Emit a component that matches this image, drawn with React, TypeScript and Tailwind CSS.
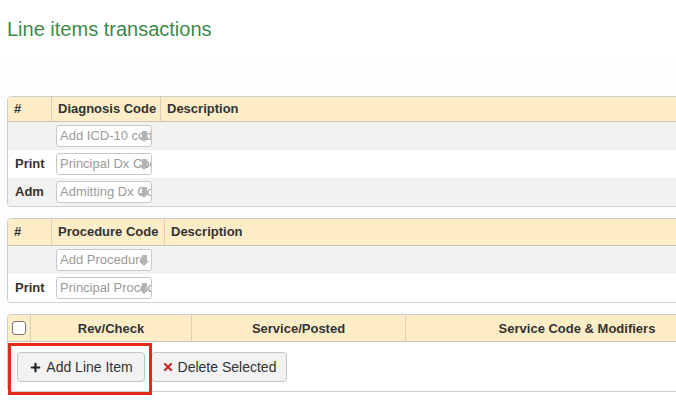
import { Plus, X } from 'lucide-react';

const font = "font-['Liberation_Sans',Arial,sans-serif]";

function CodeInput({ placeholder }: { placeholder: string }) {
  return (
    <div className="relative h-[22px] w-[96px] rounded-[3px] border border-[#c8c8c8] bg-white overflow-hidden">
      <div className="pl-[3px] pr-[6px] text-[13px] leading-[20px] text-[#9a9a9a] whitespace-nowrap overflow-hidden">
        {placeholder}
      </div>
      {/* clipped dropdown arrow glyph */}
      <div className="absolute right-[2px] top-[5px] flex flex-col items-center">
        <div className="h-[6px] w-[5px] bg-[#b4b4b4]" />
        <div className="h-0 w-0 border-x-[5px] border-t-[5px] border-x-transparent border-t-[#b4b4b4]" />
      </div>
    </div>
  );
}

function CodeTable({ codeLabel, codeWidth, headH, rows }: { codeLabel: string; codeWidth: string; headH: string; rows: { label: string; placeholder: string }[] }) {
  return (
    <div className="ml-[7px] w-[800px] rounded-[4px] border border-[#cfcfcf] overflow-hidden">
      <div className={`flex ${headH} items-center bg-[#feedc7] border-b border-[#cbc3b3] text-[13px] font-bold text-[#333] whitespace-nowrap`}>
        <div className="w-[44px] h-full flex items-center px-[6px] border-r border-[#ddd0b4]">#</div>
        <div className={`${codeWidth} h-full flex items-center px-[6px] border-r border-[#ddd0b4]`}>{codeLabel}</div>
        <div className="flex-1 px-[6px]">Description</div>
      </div>
      {rows.map((r, i) => (
        <div key={i} className={`flex h-[28px] items-center ${i % 2 === 0 ? 'bg-[#f2f2f2]' : 'bg-white'}`}>
          <div className="w-[44px] pl-[7px] text-[13px] font-bold text-[#333]">{r.label}</div>
          <div className="pl-[4px]">
            <CodeInput placeholder={r.placeholder} />
          </div>
        </div>
      ))}
    </div>
  );
}

export default function App() {
  return (
    <div className={`w-[676px] h-[406px] overflow-hidden bg-white ${font}`}>
      <h1 className="pl-[7px] pt-[17px] text-[20px] leading-[24px] text-[#3a8b48]">Line items transactions</h1>
      <div className="mt-[15px] bg-[#fdfdfd] pt-[40px]">
        <CodeTable
          codeLabel="Diagnosis Code"
          codeWidth="w-[109px]"
          headH="h-[25px]"
          rows={[
            { label: '', placeholder: 'Add ICD-10 code' },
            { label: 'Print', placeholder: 'Principal Dx Code' },
            { label: 'Adm', placeholder: 'Admitting Dx Code' },
          ]}
        />
        <div className="h-[11px]" />
        <CodeTable
          codeLabel="Procedure Code"
          codeWidth="w-[113px]"
          headH="h-[27px]"
          rows={[
            { label: '', placeholder: 'Add Procedure' },
            { label: 'Print', placeholder: 'Principal Procedure' },
          ]}
        />
        <div className="h-[11px]" />
        <div className="ml-[7px] w-[800px] rounded-[4px] border border-[#cfcfcf]">
          <div className="flex h-[27px] bg-[#feedc7] border-b border-[#cbc3b3] text-[13px] font-bold text-[#333] rounded-t-[4px] whitespace-nowrap">
            <div className="w-[23px] flex items-center justify-center border-r border-[#ddd0b4]">
              <div className="h-[14px] w-[14px] rounded-[3px] border border-[#777] bg-white" />
            </div>
            <div className="w-[161px] text-center leading-[27px] border-r border-[#ddd0b4]">Rev/Check</div>
            <div className="w-[214px] text-center leading-[27px] border-r border-[#ddd0b4]">Service/Posted</div>
            <div className="w-[342px] text-center leading-[27px]">Service Code &amp; Modifiers</div>
          </div>
          <div className="flex gap-[6px] pl-[9px] pt-[10px] pb-[9px] bg-white rounded-b-[4px]">
            <div className="relative">
              <button className="flex h-[30px] w-[128px] items-center justify-center gap-[4px] rounded-[4px] border border-[#c4c4c4] bg-[#f2f2f2] text-[14px] text-[#333]">
                <Plus size={13} strokeWidth={4} className="text-[#222]" />
                Add Line Item
              </button>
              <div className="absolute -left-[9px] -top-[9px] h-[52px] w-[144px] border-[3px] border-[#e5281a]" />
            </div>
            <button className="flex h-[30px] w-[136px] items-center justify-center gap-[4px] rounded-[4px] border border-[#c4c4c4] bg-[#f2f2f2] text-[14px] text-[#333]">
              <X size={12} strokeWidth={4.5} className="text-[#c9302c]" />
              Delete Selected
            </button>
          </div>
        </div>
      </div>
    </div>
  );
}
